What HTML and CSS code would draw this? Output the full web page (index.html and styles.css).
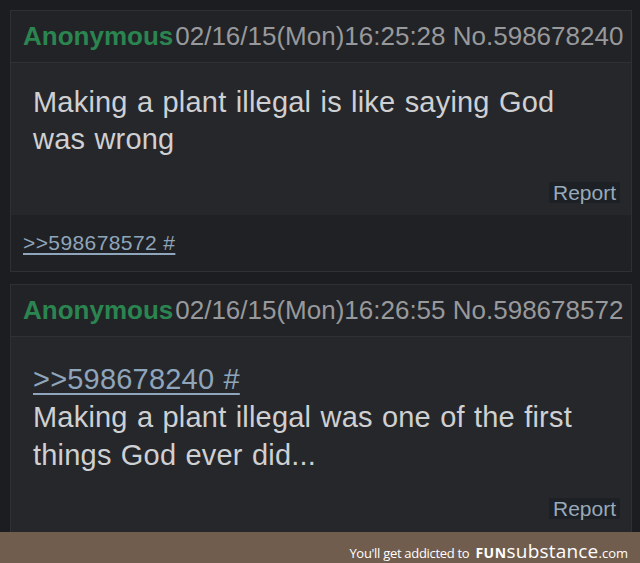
FILE: index.html
```html
<!DOCTYPE html>
<html>
<head>
<meta charset="utf-8">
<link rel="stylesheet" href="styles.css">
</head>
<body>
<div class="page">
  <div class="card">
    <div class="head"><span class="name">Anonymous</span><span class="meta">02/16/15(Mon)16:25:28 No.598678240</span></div>
    <div class="body">
      <p class="text">Making a plant illegal is like saying God was wrong</p>
      <div class="actions"><span class="report">Report</span></div>
    </div>
    <div class="foot"><a class="quote small">&gt;&gt;598678572 #</a></div>
  </div>
  <div class="card card-last">
    <div class="head"><span class="name">Anonymous</span><span class="meta">02/16/15(Mon)16:26:55 No.598678572</span></div>
    <div class="body body-last">
      <p class="text text-last"><a class="quote">&gt;&gt;598678240 #</a><br>Making a plant illegal was one of the first things God ever did...</p>
      <div class="actions"><span class="report">Report</span></div>
    </div>
  </div>
  <div class="banner"><span class="b-lead">You'll get addicted to</span><span class="b-fun">FUN</span><span class="b-sub">substance</span><span class="b-com">.com</span></div>
</div>
</body>
</html>
```
FILE: styles.css
```css
* { box-sizing: border-box; }
html, body { margin: 0; padding: 0; }
body {
  background: #1c1d20;
  font-family: "Liberation Sans", Arial, sans-serif;
  width: 640px;
  height: 563px;
  overflow: hidden;
}
.page {
  display: flex;
  flex-direction: column;
  padding-top: 10px;
  height: 563px;
}
.card {
  margin-left: 10px;
  width: 622px;
  border: 1px solid #2f3034;
  background: #26272b;
}
.card + .card { margin-top: 12px; }
.card-last { border-bottom: none; }
.head {
  height: 52px;
  line-height: 51px;
  padding-left: 12px;
  background: #222326;
  border-bottom: 1px solid #303135;
  font-size: 26px;
  white-space: nowrap;
}
.name { color: #2b8550; font-weight: bold; }
.meta { color: #98999c; margin-left: 2px; }
.body {
  padding: 21px 11px 12px 22px;
}
.body-last { padding-top: 23px; padding-bottom: 13px; }
.text {
  margin: 0 27px 0 0;
  font-size: 29px;
  line-height: 37px;
  letter-spacing: 0.2px;
  word-spacing: 1px;
  color: #cfd0d2;
}
.text-last { line-height: 38px; }
.quote {
  color: #8fa5bb;
  text-decoration: underline;
  text-decoration-thickness: 2px;
  text-underline-offset: 4px;
}
.actions {
  display: flex;
  justify-content: flex-end;
  margin-top: 24px;
}
.report {
  display: inline-block;
  font-size: 21px;
  line-height: 21px;
  padding: 0 4px;
  color: #98a9ba;
  background: #1d2024;
}
.foot {
  height: 56px;
  line-height: 56px;
  padding-left: 12px;
  background: #202124;
}
.quote.small {
  font-size: 21px;
  letter-spacing: 0.4px;
  word-spacing: 0;
  text-underline-offset: 3px;
}
.banner {
  margin-top: auto;
  height: 31px;
  background: #715d4d;
  color: #ffffff;
  display: flex;
  justify-content: flex-end;
  align-items: baseline;
  padding: 6px 12px 0 0;
  font-family: "Open Sans", "DejaVu Sans", sans-serif;
}
.b-lead { font-size: 13px; margin-right: 6px; letter-spacing: -0.3px; }
.b-fun { font-size: 14px; font-weight: bold; letter-spacing: 0.5px; }
.b-sub { font-size: 19px; letter-spacing: 0.2px; }
.b-com { font-size: 13px; }
```
